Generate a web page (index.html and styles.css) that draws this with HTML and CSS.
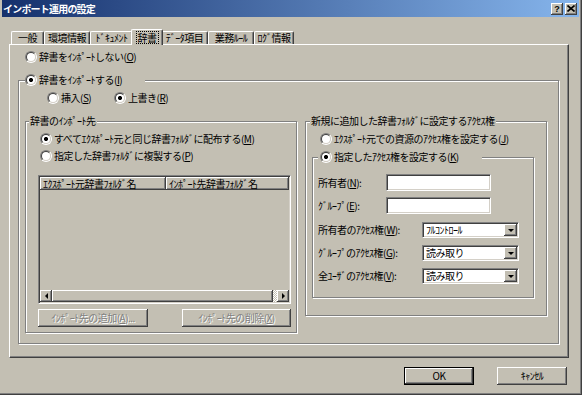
FILE: index.html
```html
<!DOCTYPE html>
<html lang="ja">
<head>
  <meta charset="UTF-8">
  <title>インポート運用の設定</title>
  <link rel="stylesheet" href="styles.css">
</head>
<body>
  <div class="window">
    <div class="titlebar">
      <span class="title">インポート運用の設定</span>
      <div class="caption-btns">
        <span class="cap-btn">?</span>
        <span class="cap-btn">
          <svg width="8" height="7" viewBox="0 0 8 7"><path d="M0.5 0.5 L7.5 6.5 M7.5 0.5 L0.5 6.5" stroke="#000" stroke-width="1.6" fill="none"/></svg>
        </span>
      </div>
    </div>

    <div class="client">
      <div class="tabs">
        <div class="tab tab-general">一般</div>
        <div class="tab tab-env">環境情報</div>
        <div class="tab tab-doc">ﾄﾞｷｭﾒﾝﾄ</div>
        <div class="tab tab-dict active"><span class="focus">辞書</span></div>
        <div class="tab tab-data">ﾃﾞｰﾀ項目</div>
        <div class="tab tab-rule">業務ﾙｰﾙ</div>
        <div class="tab tab-log">ﾛｸﾞ情報</div>
      </div>

      <div class="panel">
        <div class="option row-none"><span class="radio"></span>辞書をｲﾝﾎﾟｰﾄしない(<u>O</u>)</div>

        <div class="group group-import">
          <div class="legend legend-import"><span class="radio checked"></span>辞書をｲﾝﾎﾟｰﾄする(<u>I</u>)</div>

          <div class="mode-row">
            <div class="option mode-insert"><span class="radio"></span>挿入(<u>S</u>)</div>
            <div class="option"><span class="radio checked"></span>上書き(<u>R</u>)</div>
          </div>

          <div class="columns">
            <div class="group group-dest">
              <div class="legend legend-text">辞書のｲﾝﾎﾟｰﾄ先</div>
              <div class="option sub-option first"><span class="radio checked"></span>すべてｴｸｽﾎﾟｰﾄ元と同じ辞書ﾌｫﾙﾀﾞに配布する(<u>M</u>)</div>
              <div class="option sub-option"><span class="radio"></span>指定した辞書ﾌｫﾙﾀﾞに複製する(<u>P</u>)</div>

              <div class="list">
                <div class="list-header">
                  <div class="col col-src">ｴｸｽﾎﾟｰﾄ元辞書ﾌｫﾙﾀﾞ名</div>
                  <div class="col col-dst">ｲﾝﾎﾟｰﾄ先辞書ﾌｫﾙﾀﾞ名</div>
                </div>
                <div class="list-body"></div>
                <div class="hscroll">
                  <div class="sb-btn"><span class="arrow-left"></span></div>
                  <div class="sb-thumb"></div>
                  <div class="sb-track"></div>
                  <div class="sb-btn"><span class="arrow-right"></span></div>
                </div>
              </div>

              <div class="list-buttons">
                <div class="btn disabled btn-add">ｲﾝﾎﾟｰﾄ先の追加(<u>A</u>)...</div>
                <div class="btn disabled btn-del">ｲﾝﾎﾟｰﾄ先の削除(<u>X</u>)</div>
              </div>
            </div>

            <div class="group group-access">
              <div class="legend legend-access">新規に追加した辞書ﾌｫﾙﾀﾞに設定するｱｸｾｽ権</div>
              <div class="option sub-option first"><span class="radio"></span>ｴｸｽﾎﾟｰﾄ元での資源のｱｸｾｽ権を設定する(<u>J</u>)</div>

              <div class="group group-custom">
                <div class="legend legend-custom"><span class="radio checked"></span>指定したｱｸｾｽ権を設定する(<u>K</u>)</div>

                <div class="field field-owner">
                  <span class="field-label">所有者(<u>N</u>):</span>
                  <span class="textbox"></span>
                </div>
                <div class="field field-group">
                  <span class="field-label">ｸﾞﾙｰﾌﾟ(<u>E</u>):</span>
                  <span class="textbox"></span>
                </div>
                <div class="field field-combo first-combo">
                  <span class="field-label wide">所有者のｱｸｾｽ権(<u>W</u>):</span>
                  <span class="combo"><span class="combo-text">ﾌﾙｺﾝﾄﾛｰﾙ</span><span class="combo-btn"><span class="arrow-down"></span></span></span>
                </div>
                <div class="field field-combo">
                  <span class="field-label wide">ｸﾞﾙｰﾌﾟのｱｸｾｽ権(<u>G</u>):</span>
                  <span class="combo"><span class="combo-text">読み取り</span><span class="combo-btn"><span class="arrow-down"></span></span></span>
                </div>
                <div class="field field-combo">
                  <span class="field-label wide">全ﾕｰｻﾞのｱｸｾｽ権(<u>V</u>):</span>
                  <span class="combo"><span class="combo-text">読み取り</span><span class="combo-btn"><span class="arrow-down"></span></span></span>
                </div>
              </div>
            </div>
          </div>
        </div>
      </div>

      <div class="footer">
        <div class="btn default btn-dialog">OK</div>
        <div class="btn btn-dialog">ｷｬﾝｾﾙ</div>
      </div>
    </div>
  </div>
</body>
</html>
```

FILE: styles.css
```css
body {
  margin: 0;
  background-color: #c3bfb3;
  font-family: "Noto Sans CJK JP", sans-serif;
  font-size: 10px;
  line-height: 14px;
  letter-spacing: -0.5px;
  color: #000;
}

u {
  text-decoration: underline;
  text-underline-offset: 1px;
}

.window {
  width: 582px;
  height: 395px;
  box-sizing: border-box;
  padding: 0 3px 0 2px;
  box-shadow: inset -1px -1px #404040, inset -2px -2px #808080;
}

/* title bar */
.titlebar {
  height: 17px;
  display: flex;
  align-items: center;
  justify-content: space-between;
  padding: 0 2px 0 1px;
  background: linear-gradient(90deg, #15306c, #86b5ec);
}

.title {
  color: #fff;
  font-weight: bold;
  letter-spacing: -0.8px;
}

.caption-btns {
  display: flex;
  gap: 2px;
}

.cap-btn {
  width: 12px;
  height: 12px;
  box-sizing: border-box;
  display: flex;
  align-items: center;
  justify-content: center;
  background-color: #c3bfb3;
  box-shadow: inset -1px -1px #404040, inset 1px 1px #fff, inset -2px -2px #808080;
  font: bold 9px "Liberation Sans", sans-serif;
  letter-spacing: 0;
}

/* tabs */
.client {
  padding: 0 10px 0 7px;
}

.tabs {
  display: flex;
  align-items: flex-end;
  height: 15px;
  margin-top: 12px;
  padding-left: 2px;
}

.tab {
  height: 13px;
  box-sizing: border-box;
  display: flex;
  align-items: center;
  justify-content: center;
  border: 1px solid;
  border-bottom: none;
  border-color: #fff #404040 #404040 #fff;
  border-radius: 2px 2px 0 0;
  box-shadow: inset -1px 0 #808080;
}

.tab.active {
  height: 16px;
  margin: 0 -2px -1px;
  position: relative;
  z-index: 1;
  background-color: #c3bfb3;
}

.tab-general { width: 33px; }
.tab-env { width: 46px; }
.tab-doc { width: 43px; }
.tab-dict { width: 32px; }
.tab-data { width: 47px; }
.tab-rule { width: 46px; }
.tab-log { width: 40px; }

.focus {
  outline: 1px dotted #000;
  padding: 0 1px;
  line-height: 11px;
}

.panel {
  height: 314px;
  box-sizing: border-box;
  border: 1px solid;
  border-color: #fff #404040 #404040 #fff;
  box-shadow: inset -1px -1px #808080;
}

/* radio buttons */
.option {
  display: flex;
  align-items: center;
  height: 14px;
  white-space: nowrap;
}

.radio {
  flex: none;
  width: 12px;
  height: 12px;
  box-sizing: border-box;
  margin-right: 2px;
  border: 1px solid;
  border-color: #808080 #fff #fff #808080;
  border-radius: 50%;
  display: flex;
  align-items: center;
  justify-content: center;
}

.radio::before {
  content: "";
  width: 10px;
  height: 10px;
  box-sizing: border-box;
  border: 1px solid;
  border-color: #404040 #d4d0c8 #d4d0c8 #404040;
  border-radius: 50%;
  background: #fff;
}

.radio.checked::before {
  background: radial-gradient(circle, #000 0 1.8px, #fff 2.3px);
}

.row-none {
  margin: 5px 0 0 15px;
}

/* group boxes */
.group {
  box-sizing: border-box;
  border: 1px solid #808080;
  box-shadow: inset 1px 1px #fff, 1px 1px #fff;
}

.legend {
  display: flex;
  align-items: center;
  width: max-content;
  height: 14px;
  margin-top: -8px;
  background-color: #c3bfb3;
  white-space: nowrap;
}

.group-import {
  width: 541px;
  height: 264px;
  margin: 16px 0 0 8px;
}

.legend-import {
  width: 120px;
  margin-left: 6px;
}

.mode-row {
  display: flex;
  height: 14px;
  margin: 4px 0 0 28px;
}

.mode-insert {
  width: 67px;
}

.columns {
  display: flex;
  align-items: flex-start;
  gap: 8px;
  margin: 16px 0 0 6px;
}

.group-dest {
  width: 272px;
  height: 212px;
}

.legend-text {
  margin-left: 3px;
  padding: 0 1px;
}

.sub-option {
  margin: 3px 0 0 14px;
}

.sub-option.first {
  margin-top: 4px;
}

/* list view */
.list {
  width: 253px;
  height: 129px;
  box-sizing: border-box;
  margin: 12px 0 0 12px;
  padding: 1px;
  display: flex;
  flex-direction: column;
  border: 1px solid;
  border-color: #808080 #fff #fff #808080;
  box-shadow: inset 1px 1px #404040, inset -1px -1px #d4d0c8;
}

.list-header {
  display: flex;
  height: 13px;
}

.col {
  box-sizing: border-box;
  padding-left: 3px;
  line-height: 13px;
  white-space: nowrap;
  overflow: hidden;
  box-shadow: inset -1px -1px #404040, inset 1px 1px #fff, inset -2px -2px #808080;
}

.col-src { width: 126px; }
.col-dst { flex: 1; }

.list-body {
  flex: 1;
}

.hscroll {
  display: flex;
  height: 12px;
}

.sb-btn, .sb-thumb, .combo-btn {
  box-sizing: border-box;
  background-color: #c3bfb3;
  box-shadow: inset -1px -1px #404040, inset 1px 1px #fff, inset -2px -2px #808080;
  display: flex;
  align-items: center;
  justify-content: center;
}

.sb-btn {
  width: 12px;
}

.sb-thumb {
  width: 221px;
}

.sb-track {
  flex: 1;
  background: repeating-conic-gradient(#fff 0 25%, #c3bfb3 0 50%) 0 0 / 2px 2px;
}

.arrow-left {
  border-style: solid;
  border-width: 3px 3px 3px 0;
  border-color: transparent #000 transparent transparent;
}

.arrow-right {
  border-style: solid;
  border-width: 3px 0 3px 3px;
  border-color: transparent transparent transparent #000;
}

.arrow-down {
  border-style: solid;
  border-width: 3px 3px 0 3px;
  border-color: #000 transparent transparent transparent;
}

/* buttons */
.btn {
  height: 18px;
  box-sizing: border-box;
  display: flex;
  align-items: center;
  justify-content: center;
  white-space: nowrap;
  background-color: #c3bfb3;
  box-shadow: inset -1px -1px #404040, inset 1px 1px #fff, inset -2px -2px #808080;
}

.btn.disabled {
  color: #808080;
  text-shadow: 1px 1px #fff;
}

.btn.default {
  border: 1px solid #000;
}

.list-buttons {
  display: flex;
  justify-content: space-between;
  width: 253px;
  margin: 5px 0 0 12px;
}

.btn-add { width: 110px; }
.btn-del { width: 109px; }

/* access rights */
.group-access {
  width: 242px;
  height: 195px;
}

.legend-access {
  margin-left: 4px;
  padding: 0 1px;
}

.group-custom {
  width: 222px;
  height: 141px;
  margin: 11px 0 0 6px;
}

.legend-custom {
  width: 164px;
  box-sizing: border-box;
  margin-left: 5px;
  padding-left: 2px;
}

.field {
  display: flex;
  align-items: center;
  margin: 6px 0 0 5px;
  white-space: nowrap;
}

.field-owner {
  margin-top: 10px;
}

.field-combo {
  margin-top: 7px;
}

.field-combo.first-combo {
  margin-top: 8px;
}

.field-label {
  width: 68px;
}

.field-label.wide {
  width: 104px;
}

.textbox, .combo {
  box-sizing: border-box;
  border: 1px solid;
  border-color: #808080 #fff #fff #808080;
  box-shadow: inset 1px 1px #404040, inset -1px -1px #d4d0c8;
  background-color: #fff;
}

.textbox {
  width: 105px;
  height: 17px;
}

.combo {
  display: flex;
  width: 97px;
  height: 16px;
  padding: 1px;
}

.combo-text {
  flex: 1;
  padding-left: 2px;
  line-height: 12px;
}

.combo-btn {
  width: 13px;
}

/* dialog buttons */
.footer {
  display: flex;
  justify-content: flex-end;
  gap: 23px;
  margin-top: 9px;
  padding-right: 2px;
}

.btn-dialog {
  width: 70px;
}
```
